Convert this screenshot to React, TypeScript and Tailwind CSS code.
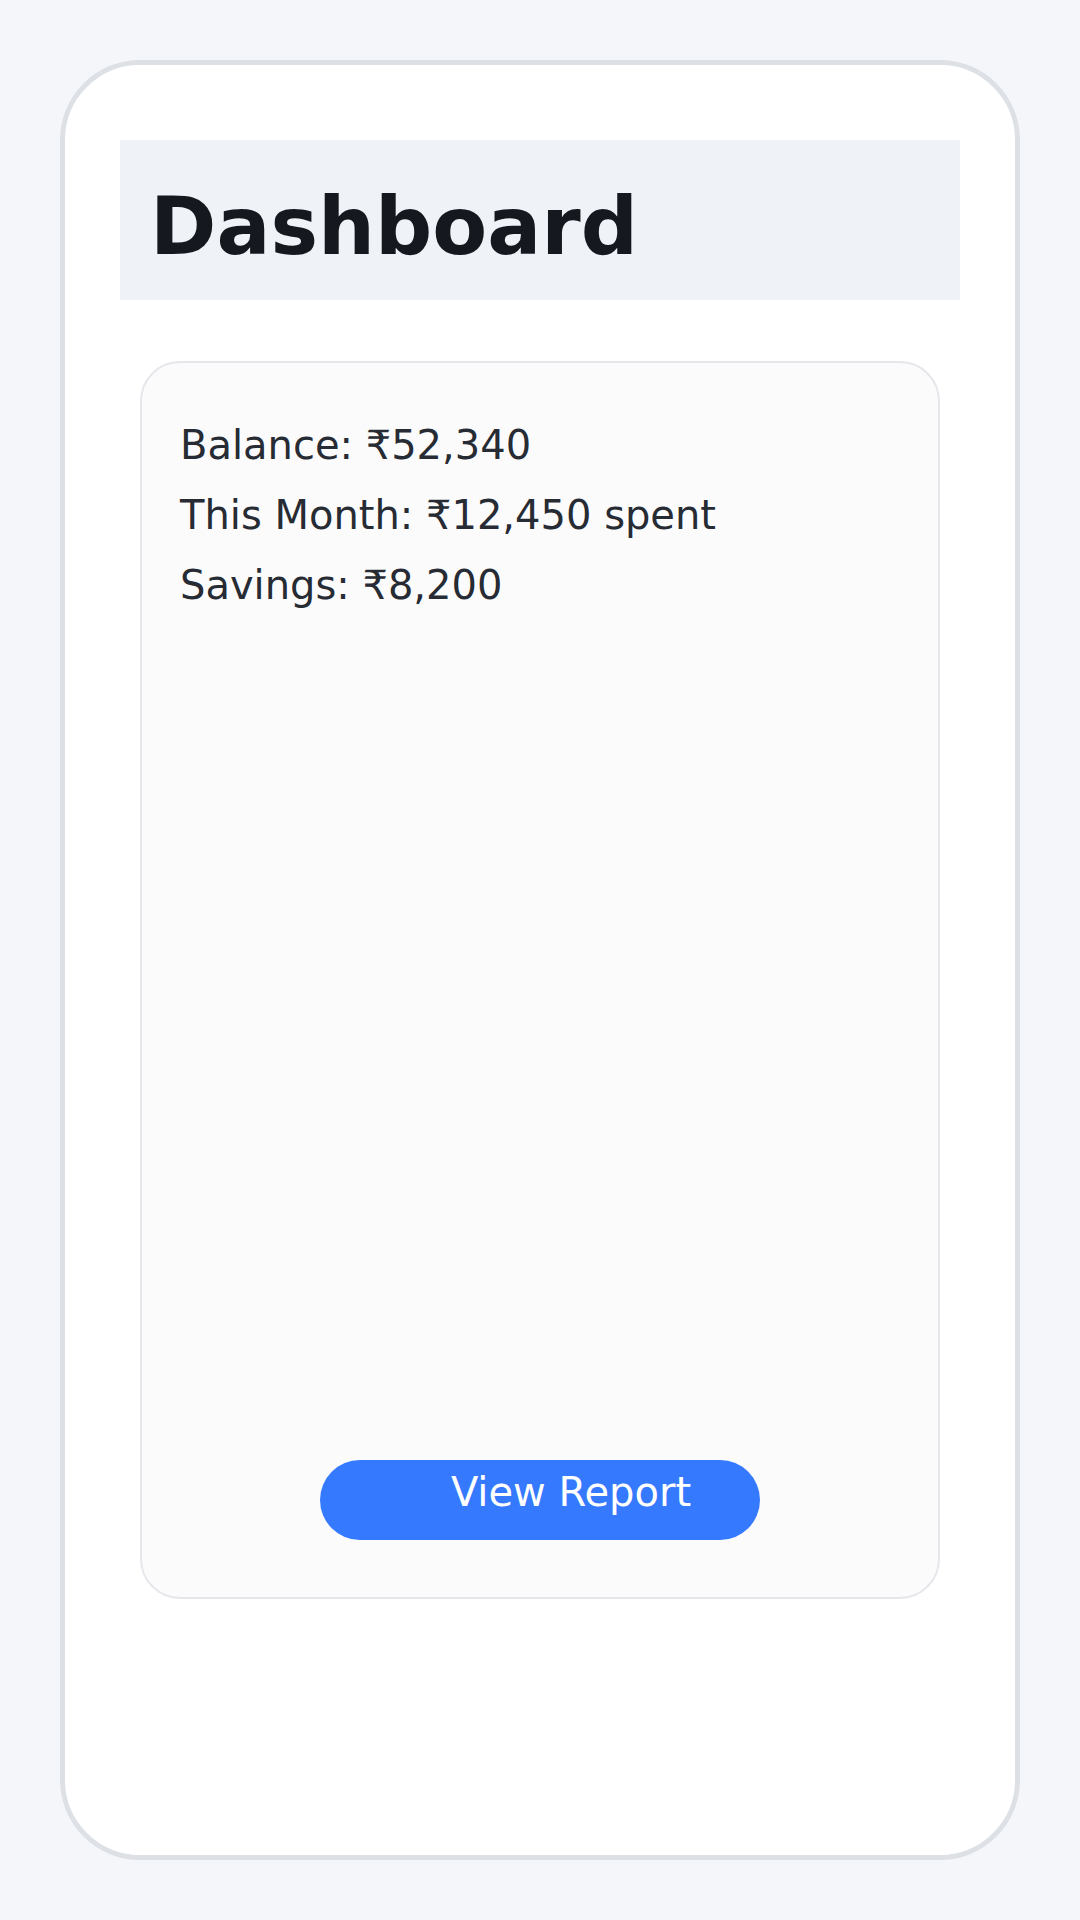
export default function App() {
  const stats = [
    "Balance: ₹52,340",
    "This Month: ₹12,450 spent",
    "Savings: ₹8,200",
  ];

  return (
    <main
      className="min-h-screen bg-[#f4f6fa] p-[60px]"
      style={{ fontFamily: '"DejaVu Sans", sans-serif' }}
    >
      <div className="h-[1800px] rounded-[80px] border-[5px] border-[#dde1e6] bg-white px-[55px] pt-[75px]">
        {/* Header */}
        <div className="flex h-[160px] items-center bg-[#eff2f7] px-[30px] pt-[14px]">
          <h1 className="text-[80px] font-bold leading-none text-[#15181e]">Dashboard</h1>
        </div>

        {/* Summary card */}
        <div className="mx-[20px] mt-[61px] flex h-[1238px] flex-col rounded-[40px] border-2 border-[#e5e7eb] bg-[#fbfbfc] px-[38px] pt-[47px] pb-[57px]">
          <div className="flex flex-col">
            {stats.map((s) => (
              <p key={s} className="text-[40px] leading-[70px] text-[#272b33]">
                {s}
              </p>
            ))}
          </div>
          <div className="mt-auto flex justify-center">
            <button className="flex h-[80px] w-[440px] items-center justify-center rounded-[40px] bg-[#3479fe] pb-[16px] pl-[62px] text-[40px] text-white">
              View Report
            </button>
          </div>
        </div>
      </div>
    </main>
  );
}
